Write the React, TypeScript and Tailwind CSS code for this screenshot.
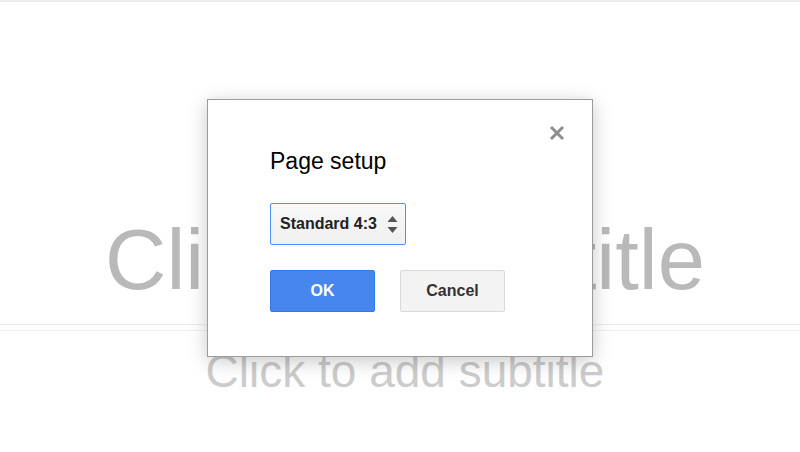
import React from "react";

function CloseIcon() {
  return (
    <svg width="16" height="16" viewBox="0 0 16 16" className="block">
      <path d="M2 2 L14 14 M14 2 L2 14" stroke="#8e8e8e" strokeWidth="3" strokeLinecap="butt" />
    </svg>
  );
}

function SelectArrows() {
  return (
    <svg width="11" height="17" viewBox="0 0 11 17" className="block">
      <path d="M5.5 0 L10.5 6 L0.5 6 Z" fill="#555" />
      <path d="M0.5 11 L10.5 11 L5.5 17 Z" fill="#555" />
    </svg>
  );
}

export default function App() {
  return (
    <div className="relative h-[452px] w-[800px] overflow-hidden bg-white font-['Liberation_Sans',Arial,sans-serif]">
      {/* slide behind the dialog */}
      <div className="h-[2px] bg-[#ececec]" />
      <div className="flex flex-col">
        <div className="mt-[215px] pl-[10px] text-center text-[85px] leading-none text-[#b9b9b9]">
          Click to add title
        </div>
        <div className="mt-[22px] h-px bg-[#ededed]" />
        <div className="mt-[5px] h-px bg-[#f0f0f0]" />
        <div className="mt-[17px] pl-[10px] text-center text-[46px] leading-none text-[#cccccc]">
          Click to add subtitle
        </div>
      </div>

      {/* dialog */}
      <div className="absolute left-[207px] top-[99px] h-[258px] w-[386px] border border-[#9c9c9c] bg-white shadow-[0_4px_18px_rgba(0,0,0,0.22)]">
        <button className="absolute left-[341px] top-[25px]">
          <CloseIcon />
        </button>
        <div className="flex flex-col items-start pl-[62px] pt-[50px]">
          <h2 className="text-[23px] leading-none text-black">Page setup</h2>
          <div className="mt-[30px] flex h-[42px] w-[136px] items-center justify-between rounded-[2px] border border-[#4d90fe] bg-gradient-to-b from-[#f8f8f8] to-[#f0f0f0] pl-[9px] pr-[7px]">
            <span className="text-[16px] font-bold text-[#222]">Standard 4:3</span>
            <SelectArrows />
          </div>
          <div className="mt-[25px] flex gap-[25px]">
            <button className="flex h-[42px] w-[105px] items-center justify-center rounded-[2px] border border-[#3079ed] bg-[#4787ed] text-[16px] font-bold text-white">
              OK
            </button>
            <button className="flex h-[42px] w-[105px] items-center justify-center rounded-[2px] border border-[#d9d9d9] bg-[#f3f3f3] text-[16px] font-bold text-[#333]">
              Cancel
            </button>
          </div>
        </div>
      </div>
    </div>
  );
}
